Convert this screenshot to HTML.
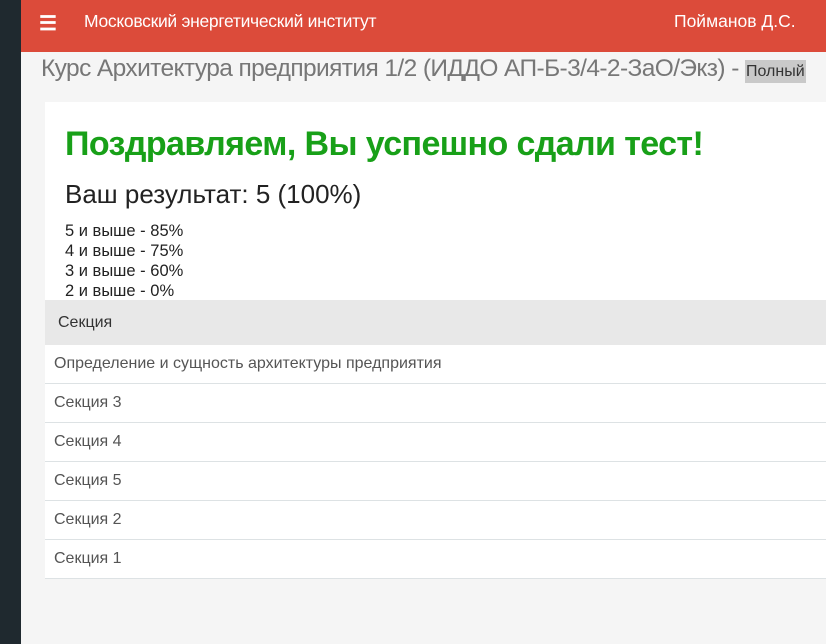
<html><head><style>
body{margin:0;width:826px;height:644px;overflow:hidden;background:#f5f5f5;font-family:"Liberation Sans",sans-serif;position:relative}
.side{position:absolute;left:0;top:0;width:21px;height:644px;background:#1f292f}
.hdr{position:absolute;left:21px;top:0;right:0;height:52px;background:#dc4b3a;color:#fff;font-size:17.5px}
.hdr .m{position:absolute;left:18px;top:11px;font-size:20px;font-weight:bold}
.hdr .t{position:absolute;left:63px;top:11px;letter-spacing:-0.3px}
.hdr .u{position:absolute;left:653px;top:11px}
.title{position:absolute;left:41px;top:55px;font-size:24.5px;color:#777;white-space:nowrap;letter-spacing:-0.6px}
.title span{background:#c9c9c9;color:#333;font-size:16px;padding:3px 1px;letter-spacing:0}
.panel{position:absolute;left:45px;top:102px;right:0;height:476px;background:#fff}
h1{position:absolute;left:20px;top:23px;margin:0;font-size:34px;font-weight:bold;color:#18a018;letter-spacing:-0.6px;white-space:nowrap}
.res{position:absolute;left:20px;top:77px;font-size:26px;color:#222}
.lst{position:absolute;left:20px;top:119px;font-size:16.5px;line-height:20px;color:#222}
.tb{position:absolute;left:0;top:198px;width:781px;font-size:16px;color:#555}
.th{height:45px;line-height:45px;background:#e8e8e8;padding-left:13px;color:#333}
.td{height:38px;line-height:38px;border-bottom:1px solid #dde2e4;padding-left:9px}
</style></head><body>
<div class="side"></div>
<div class="hdr"><div class="m">☰</div><div class="t">Московский энергетический институт</div><div class="u">Пойманов Д.С.</div></div>
<div class="title">Курс Архитектура предприятия 1/2 (ИДДО АП-Б-3/4-2-ЗаО/Экз) - <span>Полный</span></div>
<div class="panel">
<h1>Поздравляем, Вы успешно сдали тест!</h1>
<div class="res">Ваш результат: 5 (100%)</div>
<div class="lst">5 и выше - 85%<br>4 и выше - 75%<br>3 и выше - 60%<br>2 и выше - 0%</div>
<div class="tb"><div class="th">Секция</div>
<div class="td">Определение и сущность архитектуры предприятия</div>
<div class="td">Секция 3</div><div class="td">Секция 4</div><div class="td">Секция 5</div><div class="td">Секция 2</div><div class="td">Секция 1</div></div>
</div>
</body></html>
